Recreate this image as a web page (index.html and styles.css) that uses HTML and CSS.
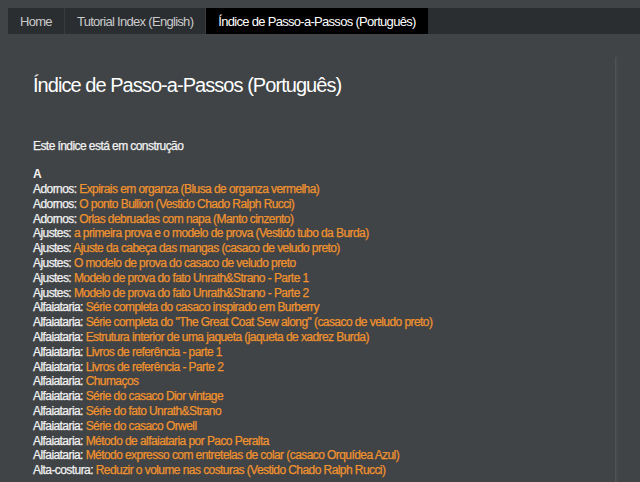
FILE: index.html
```html
<!DOCTYPE html>
<html lang="pt">
<head>
<meta charset="utf-8">
<title>Índice de Passo-a-Passos (Português)</title>
<link rel="stylesheet" href="styles.css">
</head>
<body>
<nav class="tabs">
  <a class="tab" href="#">Home</a>
  <a class="tab" href="#">Tutorial Index (English)</a>
  <a class="tab active" href="#">Índice de Passo-a-Passos (Português)</a>
</nav>
<div class="layout">
  <main class="post">
    <h1 class="title">Índice de Passo-a-Passos (Português)</h1>
    <p class="note">Este índice está em construção</p>
    <div class="letter">A</div>
    <ul class="index">
      <li><span class="cat">Adornos:</span> <a href="#">Expirais em organza (Blusa de organza vermelha)</a></li>
      <li><span class="cat">Adornos:</span> <a href="#">O ponto Bullion (Vestido Chado Ralph Rucci)</a></li>
      <li><span class="cat">Adornos:</span> <a href="#">Orlas debruadas com napa (Manto cinzento)</a></li>
      <li><span class="cat">Ajustes:</span> <a href="#">a primeira prova e o modelo de prova (Vestido tubo da Burda)</a></li>
      <li><span class="cat">Ajustes:</span> <a href="#">Ajuste da cabeça das mangas (casaco de veludo preto)</a></li>
      <li><span class="cat">Ajustes:</span> <a href="#">O modelo de prova do casaco de veludo preto</a></li>
      <li><span class="cat">Ajustes:</span> <a href="#">Modelo de prova do fato Unrath&amp;Strano - Parte 1</a></li>
      <li><span class="cat">Ajustes:</span> <a href="#">Modelo de prova do fato Unrath&amp;Strano - Parte 2</a></li>
      <li><span class="cat">Alfaiataria:</span> <a href="#">Série completa do casaco inspirado em Burberry</a></li>
      <li><span class="cat">Alfaiataria:</span> <a href="#">Série completa do "The Great Coat Sew along" (casaco de veludo preto)</a></li>
      <li><span class="cat">Alfaiataria:</span> <a href="#">Estrutura interior de uma jaqueta (jaqueta de xadrez Burda)</a></li>
      <li><span class="cat">Alfaiataria:</span> <a href="#">Livros de referência - parte 1</a></li>
      <li><span class="cat">Alfaiataria:</span> <a href="#">Livros de referência - Parte 2</a></li>
      <li><span class="cat">Alfaiataria:</span> <a href="#">Chumaços</a></li>
      <li><span class="cat">Alfaiataria:</span> <a href="#">Série do casaco Dior vintage</a></li>
      <li><span class="cat">Alfaiataria:</span> <a href="#">Série do fato Unrath&amp;Strano</a></li>
      <li><span class="cat">Alfaiataria:</span> <a href="#">Série do casaco Orwell</a></li>
      <li><span class="cat">Alfaiataria:</span> <a href="#">Método de alfaiataria por Paco Peralta</a></li>
      <li><span class="cat">Alfaiataria:</span> <a href="#">Método expresso com entretelas de colar (casaco Orquídea Azul)</a></li>
      <li><span class="cat">Alta-costura:</span> <a href="#">Reduzir o volume nas costuras (Vestido Chado Ralph Rucci)</a></li>
    </ul>
  </main>
  <aside class="side"></aside>
</div>
</body>
</html>
```
FILE: styles.css
```css
html, body {
  margin: 0;
  padding: 0;
  background: #404446;
  font-family: "Liberation Sans", Arial, sans-serif;
  color: #f2f2f2;
}
body {
  padding: 8px 0 0 8px;
  overflow: hidden;
}
.tabs {
  display: flex;
  height: 26px;
  background: #2b2e30;
}
.tab {
  display: flex;
  align-items: center;
  padding: 0 12px;
  font-size: 13px;
  letter-spacing: -0.7px;
  color: #c9cbcc;
  text-decoration: none;
  border-right: 1px solid #393c3e;
}
.tab.active {
  background: #000;
  color: #fff;
  border-right: 0;
}
.layout {
  display: flex;
  margin-top: 23px;
}
.post {
  width: 582px;
  padding: 0 0 0 25px;
  border-right: 1px solid #4e5355;
  box-shadow: 2px 0 0 #45494b;
  min-height: 440px;
}
.title {
  margin: 16px 0 0;
  font-size: 20px;
  font-weight: normal;
  letter-spacing: -0.95px;
  color: #fff;
  line-height: 24px;
}
.note {
  margin: 42px 0 0;
  font-size: 12px;
  letter-spacing: -0.57px;
  line-height: 15px;
  -webkit-text-stroke: 0.25px currentColor;
}
.letter {
  margin-top: 13px;
  font-size: 12px;
  font-weight: bold;
  line-height: 15px;
}
.index {
  list-style: none;
  margin: 0;
  padding: 0;
  font-size: 12px;
  letter-spacing: -0.57px;
  line-height: 14.8px;
  -webkit-text-stroke: 0.25px currentColor;
}
.cat {
  color: #f2f2f2;
}
.index a {
  color: #f0922e;
  text-decoration: none;
}
.side {
  flex: 1;
}
```
